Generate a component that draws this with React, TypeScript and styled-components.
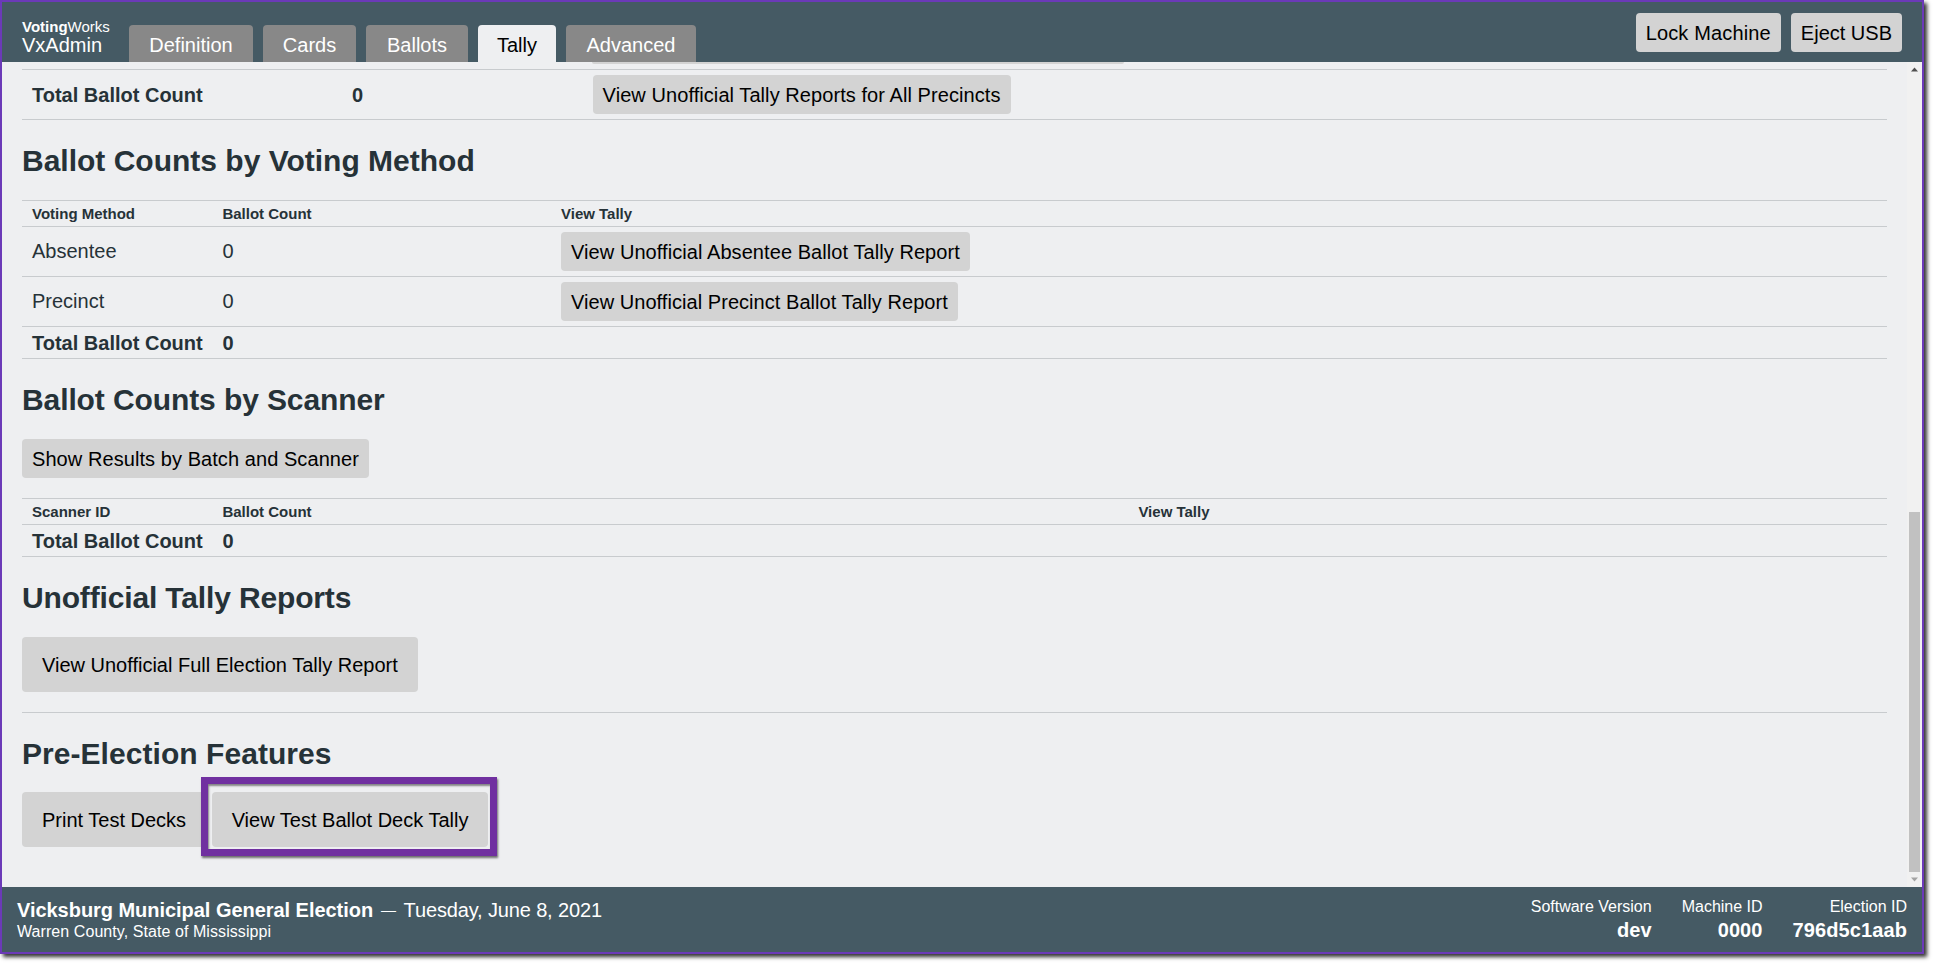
import React from 'react';
import styled, { createGlobalStyle } from 'styled-components';

const Global = createGlobalStyle`
  html, body { margin: 0; padding: 0; background: #fff; overflow: hidden; }
  body { font-family: "Liberation Sans", Arial, sans-serif; font-size: 20px; color: #263238; }
  * { box-sizing: border-box; }
`;

const Page = styled.div`
  width: 1934px;
  height: 963px;
`;

const Window = styled.div`
  width: 1924px;
  height: 954px;
  border: 2px solid #6b3ab8;
  box-shadow: 3px 3px 4px #333;
  display: flex;
  flex-direction: column;
  background: #eeeff1;
`;

const Header = styled.header`
  flex: none;
  height: 60px;
  background: #455a64;
  display: flex;
  justify-content: space-between;
  padding: 0 20px;
`;

const Nav = styled.nav`
  display: flex;
  align-items: flex-end;
`;

const Brand = styled.div`
  width: 87px;
  margin-right: 20px;
  align-self: flex-end;
  padding-bottom: 5px;
  color: #fff;
`;

const BrandMaker = styled.div`
  font-size: 15px;
  line-height: 15px;
  white-space: nowrap;
  b { font-weight: 700; }
`;

const BrandApp = styled.div`
  font-size: 20px;
  line-height: 23px;
`;

const Tabs = styled.div`
  display: flex;
  gap: 10px;
`;

const Tab = styled.div<{ $active?: boolean; $width: number }>`
  width: ${(p) => p.$width}px;
  height: 37px;
  line-height: 40px;
  text-align: center;
  border-radius: 4px 4px 0 0;
  font-size: 20px;
  background: ${(p) => (p.$active ? '#eeeff1' : '#888888')};
  color: ${(p) => (p.$active ? '#000' : '#fff')};
`;

const HeaderActions = styled.div`
  display: flex;
  gap: 10px;
  padding-top: 11px;
`;

const Button = styled.button<{ $big?: boolean; $track?: number }>`
  display: inline-block;
  border: none;
  border-radius: 4px;
  background: #d3d3d3;
  color: #000;
  font-family: inherit;
  font-size: 20px;
  line-height: 23px;
  white-space: nowrap;
  letter-spacing: ${(p) => p.$track ?? (p.$big ? 0 : 0.07)}px;
  padding: ${(p) => (p.$big ? '17px 20px 15px' : '9px 10px 7px')};
`;

const Body = styled.div`
  flex: 1;
  min-height: 0;
  display: flex;
`;

const Content = styled.main`
  flex: 1;
  min-width: 0;
  overflow: hidden;
  padding: 0 20px;
`;

const Sliver = styled.div`
  width: 532px;
  height: 2px;
  margin: 0 0 5px 570px;
  background: #d3d3d3;
  border-radius: 0 0 4px 4px;
`;

const Table = styled.div`
  border-bottom: 1px solid #c8cbce;
`;

const Row = styled.div<{ $cols: string; $kind?: 'head' | 'total' | 'body' }>`
  display: grid;
  grid-template-columns: ${(p) => p.$cols};
  align-items: center;
  padding: ${(p) => (p.$kind === 'total' ? '1px 10px 0' : '0 10px')};
  border-top: 1px solid #c8cbce;
  height: ${(p) => (p.$kind === 'head' ? '26px' : p.$kind === 'total' ? '32px' : '50px')};
  font-size: ${(p) => (p.$kind === 'head' ? '15px' : '20px')};
  font-weight: ${(p) => (p.$kind === 'head' || p.$kind === 'total' ? 700 : 400)};
`;

const Strong = styled.strong`
  position: relative;
  top: 1px;
`;

const Heading = styled.h2<{ $top: number; $bottom: number; $track?: number }>`
  margin: ${(p) => p.$top}px 0 ${(p) => p.$bottom}px;
  font-size: 30px;
  line-height: 36px;
  font-weight: 700;
  color: #263238;
  letter-spacing: ${(p) => p.$track ?? 0}px;
`;

const ButtonBlock = styled.div`
  margin-bottom: 20px;
`;

const Rule = styled.hr`
  margin: 20px 0 0;
  height: 1px;
  border: none;
  background: #c8cbce;
`;

const ButtonRow = styled.div`
  display: flex;
  gap: 5.5px;
`;

const Highlighted = styled.div`
  position: relative;
`;

const Frame = styled.div`
  position: absolute;
  top: -15px;
  left: -11px;
  right: -9px;
  bottom: -9px;
  border: 7px solid #7030a0;
  box-shadow: 1px 2px 2px rgba(0, 0, 0, 0.55), inset 1px 2px 2px rgba(0, 0, 0, 0.45);
  pointer-events: none;
`;

const ScrollBar = styled.div`
  flex: none;
  width: 15px;
  background: #f1f1f1;
  display: flex;
  flex-direction: column;
  align-items: center;
`;

const ScrollArrow = styled.svg`
  flex: none;
  width: 15px;
  height: 15px;
  display: block;
`;

const ScrollSpace = styled.div`
  flex: 1;
`;

const ScrollThumb = styled.div`
  flex: none;
  width: 11px;
  height: 360px;
  background: #c1c1c1;
`;

const Footer = styled.footer`
  flex: none;
  height: 65px;
  background: #455a64;
  color: #fff;
  display: flex;
  justify-content: space-between;
  align-items: center;
  padding: 0 15px;
`;

const ElectionInfo = styled.div`
  display: flex;
  flex-direction: column;
  gap: 1px;
`;

const ElectionTitle = styled.div`
  display: flex;
  align-items: center;
  font-size: 20px;
  line-height: 24px;
`;

const ElectionName = styled.strong`
  letter-spacing: -0.04px;
`;

const Dash = styled.span`
  font-size: 15px;
  margin: 0 7.5px 0 8px;
`;

const ElectionDate = styled.span`
  letter-spacing: -0.14px;
`;

const ElectionPlace = styled.div`
  font-size: 16px;
  line-height: 18px;
  letter-spacing: 0.07px;
`;

const Stats = styled.div`
  display: flex;
  gap: 30px;
`;

const Stat = styled.div`
  text-align: right;
`;

const StatLabel = styled.div`
  font-size: 16px;
  line-height: 20px;
  margin-bottom: 1px;
`;

const StatValue = styled.div`
  font-size: 20px;
  line-height: 24px;
  font-weight: 700;
  letter-spacing: 0.1px;
`;

const topCols = '320px 240.6px 1fr';
const methodCols = '190.4px 338.6px 1fr';
const scannerCols = '190.4px 916px 1fr';

export default function App() {
  return (
    <Page>
      <Global />
      <Window>
        <Header>
          <Nav>
            <Brand>
              <BrandMaker>
                <b>Voting</b>Works
              </BrandMaker>
              <BrandApp>VxAdmin</BrandApp>
            </Brand>
            <Tabs>
              <Tab $width={124}>Definition</Tab>
              <Tab $width={93}>Cards</Tab>
              <Tab $width={102}>Ballots</Tab>
              <Tab $width={78} $active>Tally</Tab>
              <Tab $width={130}>Advanced</Tab>
            </Tabs>
          </Nav>
          <HeaderActions>
            <div><Button $track={0.15}>Lock Machine</Button></div>
            <div><Button $track={0}>Eject USB</Button></div>
          </HeaderActions>
        </Header>
        <Body>
          <Content>
            <Sliver />
            <Table>
              <Row $cols={topCols} $kind="body">
                <Strong>Total Ballot Count</Strong>
                <Strong>0</Strong>
                <div><Button>View Unofficial Tally Reports for All Precincts</Button></div>
              </Row>
            </Table>

            <Heading $top={23} $bottom={21}>Ballot Counts by Voting Method</Heading>
            <Table>
              <Row $cols={methodCols} $kind="head">
                <div>Voting Method</div>
                <div>Ballot Count</div>
                <div>View Tally</div>
              </Row>
              <Row $cols={methodCols}>
                <div>Absentee</div>
                <div>0</div>
                <div><Button>View Unofficial Absentee Ballot Tally Report</Button></div>
              </Row>
              <Row $cols={methodCols}>
                <div>Precinct</div>
                <div>0</div>
                <div><Button $track={0.05}>View Unofficial Precinct Ballot Tally Report</Button></div>
              </Row>
              <Row $cols={methodCols} $kind="total">
                <div>Total Ballot Count</div>
                <div>0</div>
                <div />
              </Row>
            </Table>

            <Heading $top={23} $bottom={21} $track={-0.1}>Ballot Counts by Scanner</Heading>
            <ButtonBlock>
              <Button>Show Results by Batch and Scanner</Button>
            </ButtonBlock>
            <Table>
              <Row $cols={scannerCols} $kind="head">
                <div>Scanner ID</div>
                <div>Ballot Count</div>
                <div>View Tally</div>
              </Row>
              <Row $cols={scannerCols} $kind="total">
                <div>Total Ballot Count</div>
                <div>0</div>
                <div />
              </Row>
            </Table>

            <Heading $top={23} $bottom={21} $track={-0.15}>Unofficial Tally Reports</Heading>
            <div>
              <Button $big>View Unofficial Full Election Tally Report</Button>
            </div>
            <Rule />

            <Heading $top={23} $bottom={20} $track={0.05}>Pre-Election Features</Heading>
            <ButtonRow>
              <Button $big>Print Test Decks</Button>
              <Highlighted>
                <Button $big>View Test Ballot Deck Tally</Button>
                <Frame />
              </Highlighted>
            </ButtonRow>
          </Content>
          <ScrollBar>
            <ScrollArrow viewBox="0 0 15 15">
              <path d="M7.5 5.5 L11 9.5 L4 9.5 Z" fill="#505050" />
            </ScrollArrow>
            <ScrollSpace />
            <ScrollThumb />
            <ScrollArrow viewBox="0 0 15 15">
              <path d="M4 5.5 L11 5.5 L7.5 9.5 Z" fill="#a3a3a3" />
            </ScrollArrow>
          </ScrollBar>
        </Body>
        <Footer>
          <ElectionInfo>
            <ElectionTitle>
              <ElectionName>Vicksburg Municipal General Election</ElectionName>
              <Dash>—</Dash>
              <ElectionDate>Tuesday, June 8, 2021</ElectionDate>
            </ElectionTitle>
            <ElectionPlace>Warren County, State of Mississippi</ElectionPlace>
          </ElectionInfo>
          <Stats>
            <Stat>
              <StatLabel>Software Version</StatLabel>
              <StatValue>dev</StatValue>
            </Stat>
            <Stat>
              <StatLabel>Machine ID</StatLabel>
              <StatValue>0000</StatValue>
            </Stat>
            <Stat>
              <StatLabel>Election ID</StatLabel>
              <StatValue>796d5c1aab</StatValue>
            </Stat>
          </Stats>
        </Footer>
      </Window>
    </Page>
  );
}
